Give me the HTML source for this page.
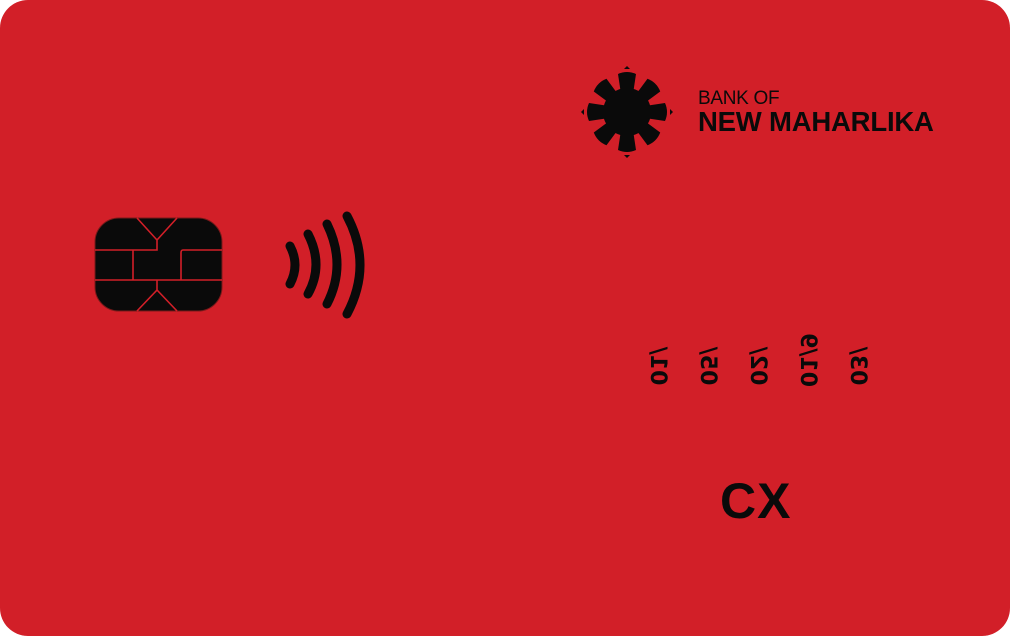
<!DOCTYPE html>
<html><head><style>
html,body{margin:0;padding:0;background:#fff;width:1012px;height:638px;overflow:hidden}
.card{position:absolute;left:0;top:0;width:1010px;height:636px;background:#d21f28;border-radius:28px}
.t{position:absolute;font-family:"Liberation Sans",sans-serif;color:#0a0a0a}
.d{position:absolute;font-family:"DejaVu Sans",sans-serif;font-size:22px;font-weight:bold;color:#0a0a0a;transform:rotate(-90deg) scaleY(-1);transform-origin:center;white-space:nowrap;width:60px;text-align:center;line-height:20px}
</style></head><body>
<div class="card"></div>
<svg style="position:absolute;left:0;top:0" width="1012" height="638">
<g transform="translate(627,112)" fill="#0a0a0a">
<circle r="24"/>
<g id="r"><path d="M-6,-18 L6,-18 L9,-38 Q0,-42 -9,-38 Z"/></g>
<use href="#r" transform="rotate(45)"/><use href="#r" transform="rotate(90)"/><use href="#r" transform="rotate(135)"/>
<use href="#r" transform="rotate(180)"/><use href="#r" transform="rotate(225)"/><use href="#r" transform="rotate(270)"/><use href="#r" transform="rotate(315)"/>
<polygon points="-3,-43 3,-43 0,-46"/><polygon points="-3,43 3,43 0,46"/><polygon points="-43,-3 -43,3 -46,0"/><polygon points="43,-3 43,3 46,0"/>
</g>
<rect x="95" y="218" width="127" height="93" rx="24" fill="#0a0a0a" stroke="#7a1a1a" stroke-width="1"/>
<g stroke="#d21f28" stroke-width="1.6" fill="none">
<path d="M95 250 H133 V280 H95 M95 280 H222 M222 250 H183 Q181 250 181 253 V280 M133 250 H157 V240 L137 218 M157 240 L177 218 M157 280 V290 L137 311 M157 290 L177 311"/>
</g>
<g stroke="#0a0a0a" stroke-width="9" stroke-linecap="round" fill="none">
<path d="M290 246 Q300 265 290 284"/>
<path d="M308 234 Q324 265 308 294"/>
<path d="M327 224 Q347 265 327 304"/>
<path d="M347 216 Q373 265 347 314"/>
</g>
</svg>
<div class="t" style="left:698px;top:88px;font-size:19px;font-weight:300;letter-spacing:-0.3px">BANK OF</div>
<div class="t" style="left:698px;top:106px;font-size:27.5px;font-weight:bold;letter-spacing:-0.2px">NEW MAHARLIKA</div>
<div class="d" style="left:627px;top:356px">01/</div>
<div class="d" style="left:677px;top:356px">05/</div>
<div class="d" style="left:727px;top:356px">02/</div>
<div class="d" style="left:777px;top:350px">01/9</div>
<div class="d" style="left:827px;top:356px">03/</div>
<div class="t" style="left:720px;top:472px;font-size:50px;font-weight:bold;letter-spacing:1px">CX</div>
</body></html>
